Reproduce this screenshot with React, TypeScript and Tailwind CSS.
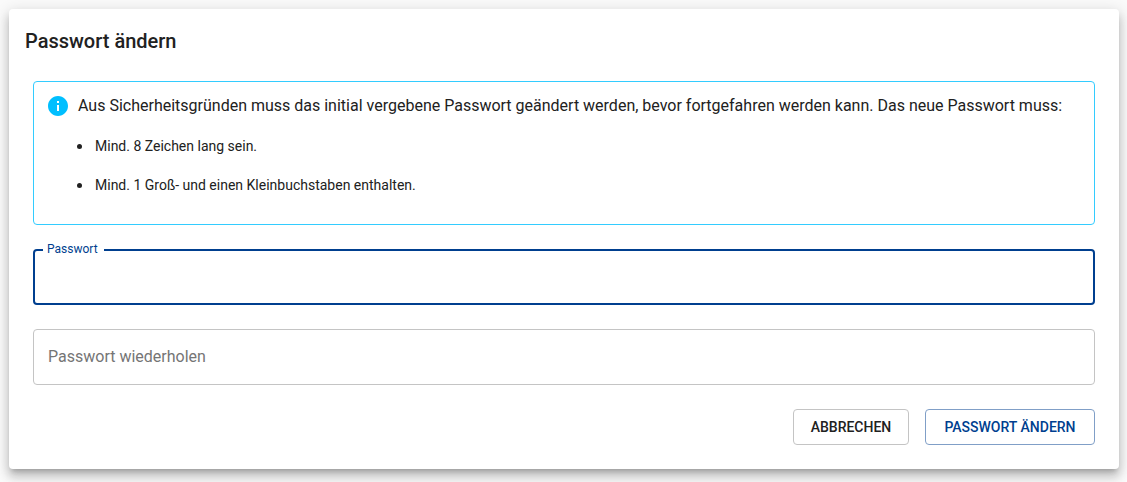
import { useState } from "react";

const rules = ["Mind. 8 Zeichen lang sein.", "Mind. 1 Groß- und einen Kleinbuchstaben enthalten."];

function InfoIcon() {
  return (
    <svg viewBox="0 0 24 24" className="size-6 shrink-0 fill-[#00bfff]" aria-hidden="true">
      <path d="M12 2C6.48 2 2 6.48 2 12s4.48 10 10 10 10-4.48 10-10S17.52 2 12 2zm1 15h-2v-6h2v6zm0-8h-2V7h2v2z" />
    </svg>
  );
}

function PasswordForm() {
  const [password, setPassword] = useState("");
  const [repeat, setRepeat] = useState("");
  return (
    <form className="flex flex-col gap-6" onSubmit={(e) => e.preventDefault()}>
      <div className="relative">
        <label htmlFor="password" className="absolute -top-2 left-2.5 bg-white pr-1.5 pl-1 text-xs leading-4 text-[#003f8f]">
          Passwort
        </label>
        <input
          id="password"
          type="password"
          value={password}
          onChange={(e) => setPassword(e.target.value)}
          className="block h-14 w-full rounded-sm border-2 border-[#003f8f] px-3 text-base outline-none"
        />
      </div>
      <input
        type="password"
        aria-label="Passwort wiederholen"
        placeholder="Passwort wiederholen"
        value={repeat}
        onChange={(e) => setRepeat(e.target.value)}
        className="block h-14 w-full rounded-sm border border-[#c4c4c4] px-3.5 pb-0.5 text-base outline-none placeholder:text-[#757575]"
      />
      <div className="flex justify-end gap-4">
        <button type="button" className="h-9 min-w-[116px] rounded-sm border border-[#c4c4c4] px-3 text-sm font-medium uppercase">
          Abbrechen
        </button>
        <button type="submit" className="h-9 min-w-[170px] rounded-sm border border-[#809fc7] px-3 text-sm font-medium text-[#003f8f] uppercase">
          Passwort ändern
        </button>
      </div>
    </form>
  );
}

export default function App() {
  return (
    <main className="min-h-screen bg-[#fafafa] px-2 pt-[9px] pb-[13px] font-[Roboto,sans-serif] text-[#212121]">
      <section
        aria-labelledby="title"
        className="ml-px rounded-sm bg-white shadow-[0_5px_5px_-3px_rgba(0,0,0,0.2),0_8px_10px_1px_rgba(0,0,0,0.14),0_3px_14px_2px_rgba(0,0,0,0.12)]"
      >
        <h1 id="title" className="px-4 py-4 text-xl leading-8 font-medium">
          Passwort ändern
        </h1>
        <div className="flex flex-col gap-6 px-6 pt-2 pb-6">
          <div className="rounded-sm border border-[#33ccff] px-3 pt-3 pb-[29px]">
            <div className="flex items-center gap-2">
              <InfoIcon />
              <p className="text-base">
                Aus Sicherheitsgründen muss das initial vergebene Passwort geändert werden, bevor fortgefahren werden kann. Das neue Passwort muss:
              </p>
            </div>
            <ul className="mt-[18px] flex list-none flex-col gap-[19px] pl-[31px] text-sm leading-5">
              {rules.map((rule) => (
                <li key={rule} className="flex items-center gap-[13px] before:size-[5px] before:shrink-0 before:rounded-full before:bg-[#212121]">
                  {rule}
                </li>
              ))}
            </ul>
          </div>
          <PasswordForm />
        </div>
      </section>
    </main>
  );
}
